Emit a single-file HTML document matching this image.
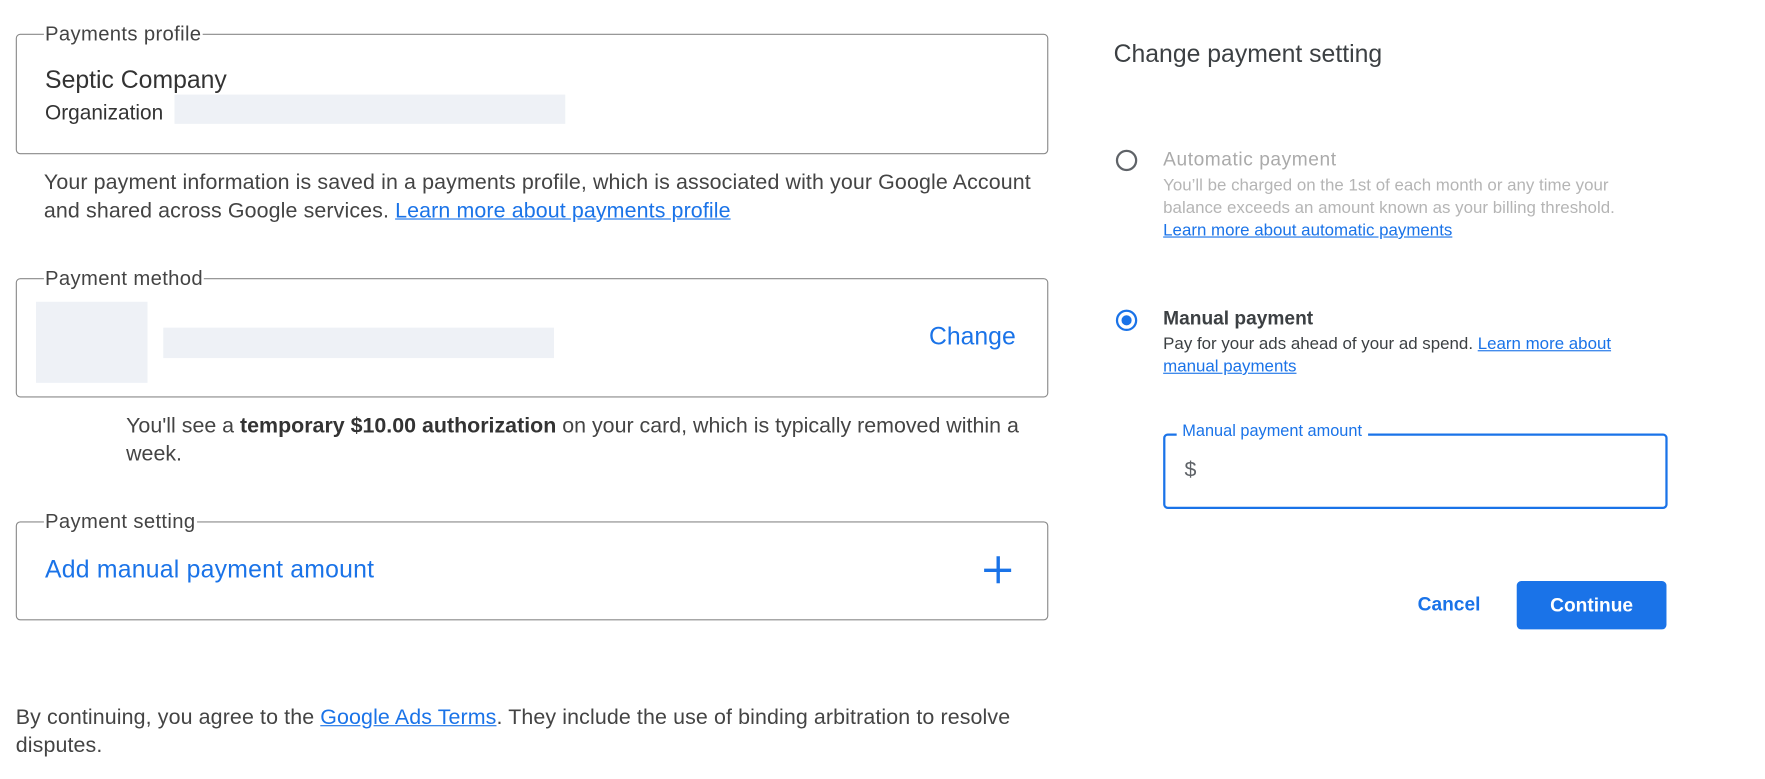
<!DOCTYPE html>
<html><head><meta charset="utf-8"><style>
html,body{margin:0;padding:0;background:#fff;width:1765px;height:778px;overflow:hidden}
#w{position:absolute;left:0;top:0;width:1570px;height:692px;transform:scale(1.126);transform-origin:0 0;font-family:"Liberation Sans",Arial,sans-serif;color:#3c4043}
.a{position:absolute;white-space:nowrap}
.box{position:absolute;border:1px solid #8a8a8a;border-radius:4px}
.lg{position:absolute;background:#fff;padding:0 1px;font-size:18px;color:#444;line-height:20px;letter-spacing:0.3px}
a{color:#1a73e8;text-decoration:underline}
.blue{color:#1a73e8}
</style></head><body><div id="w">
<div class="box" style="left:14px;top:30px;width:915px;height:105px"></div>
<div class="lg" style="left:39px;top:20px">Payments profile</div>
<div class="a" style="left:40px;top:58px;font-size:22px;color:#333">Septic Company</div>
<div class="a" style="left:40px;top:89px;font-size:18.5px;color:#333">Organization</div>
<div class="a" style="left:155px;top:84px;width:347px;height:26px;background:#eef1f6"></div>
<div class="a" style="left:39px;top:150px;font-size:19px;line-height:25px;color:#444;letter-spacing:0.1px">Your payment information is saved in a payments profile, which is associated with your Google Account<br>and shared across Google services. <a>Learn more about payments profile</a></div>

<div class="box" style="left:14px;top:247px;width:915px;height:104px"></div>
<div class="lg" style="left:39px;top:237px">Payment method</div>
<div class="a" style="left:32px;top:268px;width:99px;height:72px;background:#eef1f6"></div>
<div class="a" style="left:145px;top:291px;width:347px;height:27px;background:#eef1f6"></div>
<div class="a blue" style="left:825px;top:286px;font-size:22px">Change</div>
<div class="a" style="left:112px;top:366px;font-size:19px;line-height:25px;color:#444">You'll see a <b style="color:#333">temporary $10.00 authorization</b> on your card, which is typically removed within a<br>week.</div>

<div class="box" style="left:14px;top:463px;width:915px;height:86px"></div>
<div class="lg" style="left:39px;top:453px">Payment setting</div>
<div class="a blue" style="left:40px;top:493px;font-size:22px;letter-spacing:0.2px">Add manual payment amount</div>
<div class="a" style="left:874px;top:505px;width:24px;height:3px;background:#1a73e8"></div>
<div class="a" style="left:885px;top:494px;width:3px;height:24px;background:#1a73e8"></div>
<div class="a" style="left:14px;top:625px;font-size:19px;line-height:25px;color:#444;letter-spacing:0.1px">By continuing, you agree to the <a>Google Ads Terms</a>. They include the use of binding arbitration to resolve<br>disputes.</div>

<div class="a" style="left:989px;top:35px;font-size:22px;color:#3c4043">Change payment setting</div>
<div class="a" style="left:991px;top:133px;width:15px;height:15px;border:2px solid #5f6368;border-radius:50%"></div>
<div class="a" style="left:1033px;top:132px;font-size:17px;letter-spacing:0.5px;color:#aaa">Automatic payment</div>
<div class="a" style="left:1033px;top:155px;font-size:15px;line-height:20px;color:#b5b5b5">You’ll be charged on the 1st of each month or any time your<br>balance exceeds an amount known as your billing threshold.<br><a>Learn more about automatic payments</a></div>
<div class="a" style="left:991px;top:275px;width:15px;height:15px;border:2px solid #1a73e8;border-radius:50%"></div>
<div class="a" style="left:996px;top:280px;width:9px;height:9px;background:#1a73e8;border-radius:50%"></div>
<div class="a" style="left:1033px;top:273px;font-size:17px;font-weight:bold;color:#3c4043">Manual payment</div>
<div class="a" style="left:1033px;top:296px;font-size:15px;line-height:20px;color:#3c4043">Pay for your ads ahead of your ad spend. <a>Learn more about</a><br><a>manual payments</a></div>
<div class="a" style="left:1033px;top:385px;width:444px;height:63px;border:2px solid #1a73e8;border-radius:4px"></div>
<div class="a" style="left:1045px;top:375px;background:#fff;padding:0 5px;font-size:14.5px;color:#1a73e8">Manual payment amount</div>
<div class="a" style="left:1052px;top:407px;font-size:19px;color:#5f6368">$</div>
<div class="a" style="left:1259px;top:527px;font-size:17px;font-weight:bold;color:#1a73e8">Cancel</div>
<div class="a" style="left:1347px;top:516px;width:133px;height:43px;background:#1a73e8;border-radius:4px;color:#fff;font-size:17px;font-weight:bold;text-align:center;line-height:43px">Continue</div>
</div></body></html>
